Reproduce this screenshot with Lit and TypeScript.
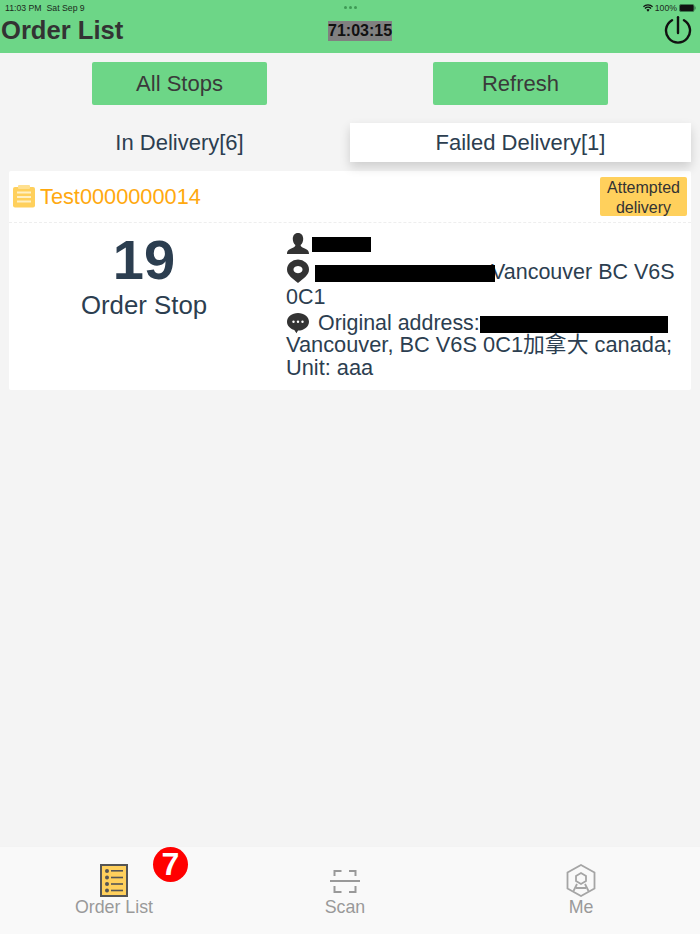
import { LitElement, html, css } from "lit";
import { customElement } from "lit/decorators.js";

@customElement("app-root")
export class AppRoot extends LitElement {
  static styles = css`
    :host { display: flex; flex-direction: column; width: 700px; height: 934px; background: #f4f4f4; color: #2c3e50; font-family: "Liberation Sans", "Noto Sans CJK SC", sans-serif; overflow: hidden; }
    .header { height: 53px; background: #6dd687; display: flex; flex-direction: column; flex: none; box-sizing: border-box; }
    .status { height: 15px; flex: none; display: grid; grid-template-columns: 1fr auto 1fr; align-items: center; padding: 0 4px 0 5px; font-size: 8.7px; color: #1c2b20; }
    .status .l { display: flex; gap: 5px; }
    .dots { display: flex; gap: 2px; }
    .dots i { width: 3px; height: 3px; border-radius: 50%; background: #3e9a55; }
    .status .r { display: flex; justify-content: flex-end; align-items: center; gap: 2px; }
    .titlebar { height: 30px; flex: none; display: grid; grid-template-columns: 327px auto 1fr; align-items: center; padding: 0 8px 0 1px; }
    h1 { margin: 0; font-size: 25.6px; line-height: 30px; font-weight: 700; color: #333; }
    .timer { background: #808080; color: #111; font-weight: 700; font-size: 16px; line-height: 20px; height: 20px; position: relative; top: 1px; }
    .power { justify-self: end; width: 28px; height: 28px; display: block; }
    .actions { display: grid; grid-template-columns: 350px 350px; padding-top: 9px; }
    .btn { justify-self: center; width: 175px; height: 43px; background: #6dd687; border-radius: 2px; font-size: 22px; line-height: 44px; text-align: center; color: #3a3a3a; }
    .a1 { margin-left: 9px; } .a2 { margin-right: 9px; }
    .tabs { display: grid; grid-template-columns: 350px 341px; margin-top: 18px; height: 39px; }
    .tab { font-size: 22px; line-height: 39px; text-align: center; }
    .tab.on { background: #fff; box-shadow: 0 5px 10px rgba(0,0,0,.16); position: relative; }
    .tab.off { padding-left: 9px; }
    .card { margin: 9px 9px 0; background: #fff; border-radius: 2px; height: 219px; display: flex; flex-direction: column; }
    .chead { height: 51px; border-bottom: 1px dashed #eee; display: flex; align-items: center; justify-content: space-between; padding: 0 4px; flex: none; }
    .cid { display: flex; align-items: center; gap: 4px; font-size: 21.75px; color: #ffa90f; }
    .badge { width: 87px; height: 39px; background: #ffd05c; border-radius: 2px; font-size: 16px; line-height: 20px; text-align: center; color: #333; margin-top: -1px; padding-top: 1px; box-sizing: border-box; }
    .cbody { display: grid; grid-template-columns: 277px 1fr; flex: 1; }
    .stop { text-align: center; padding-right: 7px; }
    .num { font-size: 56px; font-weight: 700; line-height: 60px; margin-top: 7px; }
    .lbl { font-size: 25.8px; line-height: 30px; }
    .info { font-size: 21.8px; line-height: 22.5px; padding: 9px 8px 0 0; }
    .info svg { vertical-align: -4px; }
    .addr { line-height: 25px; margin-top: 2px; font-size: 21.5px; }
    .orig { margin-top: 2px; }
    .oa { font-size: 21.4px; }
    .oi { margin-right: 2px; }
    .red { display: inline-block; background: #000; vertical-align: baseline; position: relative; }
    .r1 { width: 59px; height: 15px; margin-left: 2px; }
    .r2 { width: 180px; height: 17px; margin: 0 -4px 0 5px; vertical-align: -3px; }
    .r3 { width: 188px; height: 17px; vertical-align: -3px; }
    .spacer { flex: 1; }
    .footer { height: 88px; background: #f9f9f9; border-top: 1px solid #f3f3f3; box-sizing: border-box; display: grid; grid-template-columns: 228px 234px 238px; flex: none; position: relative; }
    .item { display: flex; flex-direction: column; align-items: center; font-size: 17.8px; color: #999; padding-top: 17px; line-height: 20px; }
    .item svg { display: block; height: 33px; }
    .badge7 { position: absolute; left: 153px; top: 0; width: 35px; height: 35px; border-radius: 50%; background: #f00; color: #fff; font-size: 32px; font-weight: 700; line-height: 35px; text-align: center; }
  `;
  render() {
    return html`
      <div class="header">
        <div class="status">
          <div class="l"><span>11:03 PM</span><span>Sat Sep 9</span></div>
          <div class="dots"><i></i><i></i><i></i></div>
          <div class="r">
            <svg width="10" height="8" viewBox="0 0 11 8"><path d="M5.5 8 3.7 6a2.6 2.6 0 0 1 3.6 0zM2.7 5 1.6 3.9a5.6 5.6 0 0 1 7.8 0L8.3 5a4 4 0 0 0-5.6 0zM.9 3.2 0 2.2a7.8 7.8 0 0 1 11 0l-.9 1a6.5 6.5 0 0 0-9.2 0z" fill="#111"/></svg>
            <span>100%</span>
            <svg width="17" height="8" viewBox="0 0 17 8"><rect x=".5" y=".5" width="14.5" height="7" rx="1.5" fill="#111" stroke="#3a7a4c"/><rect x="15.6" y="2.6" width="1" height="2.8" fill="#3a7a4c"/></svg>
          </div>
        </div>
        <div class="titlebar">
          <h1>Order List</h1>
          <div class="timer">71:03:15</div>
          <svg class="power" viewBox="0 0 28 28" fill="none" stroke="#111" stroke-width="2.4" stroke-linecap="round"><path d="M14 1.200V17"/><path d="M8 4.200A12 12 0 1 0 20 4.200"/></svg>
        </div>
      </div>
      <div class="actions">
        <div class="btn a1">All Stops</div>
        <div class="btn a2">Refresh</div>
      </div>
      <div class="tabs">
        <div class="tab off">In Delivery[6]</div>
        <div class="tab on">Failed Delivery[1]</div>
      </div>
      <div class="card">
        <div class="chead">
          <div class="cid">
            <svg width="23" height="23" viewBox="0 0 23 23"><rect x="0" y="2" width="22" height="20.500" rx="2" fill="#ffd05c"/><rect x="5" y="0" width="12" height="4" rx="1" fill="#ffe08f"/><path d="M4 7.500h14M4 12h14M4 16.500h14" stroke="#fff0c4" stroke-width="1.800"/></svg>
            <span>Test0000000014</span>
          </div>
          <div class="badge">Attempted delivery</div>
        </div>
        <div class="cbody">
          <div class="stop">
            <div class="num">19</div>
            <div class="lbl">Order Stop</div>
          </div>
          <div class="info">
            <div>
              <svg width="24" height="24" viewBox="0 0 24 24"><path d="M12 1c3.400 0 5.200 2.600 5.200 6 0 2.600-1 4.800-2.600 6 .1 1.600 1 2.200 3.600 3.300 3 1.200 4.800 2.200 4.800 5.700H1c0-3.500 1.800-4.500 4.800-5.700 2.600-1.100 3.500-1.700 3.600-3.300C7.800 11.800 6.800 9.600 6.800 7 6.800 3.600 8.600 1 12 1z" fill="#333"/></svg><span class="red r1"></span>
            </div>
            <div class="addr">
              <svg width="24" height="24" viewBox="0 0 24 24"><path fill-rule="evenodd" d="M12 24C6 19 1 16 1 10.500A11 10 0 0 1 23 10.500C23 16 18 19 12 24zM12 7a4.500 3.600 0 1 0 .01 0z" fill="#333"/></svg><span class="red r2"></span>Vancouver BC V6S 0C1
            </div>
            <div class="orig">
              <svg class="oi" width="24" height="22" viewBox="0 0 24 22"><path d="M12 1c6 0 11 3.700 11 8.800 0 5-5 8.800-11 8.800l-1.500 2.600-2.200-3.100C4 16.800 1 13.600 1 9.800 1 4.700 6 1 12 1z" fill="#333"/><circle cx="7.500" cy="9.800" r="1.200" fill="#fff"/><circle cx="12" cy="9.800" r="1.200" fill="#fff"/><circle cx="16.500" cy="9.800" r="1.200" fill="#fff"/></svg>
              <span class="oa">Original address:</span><span class="red r3"></span> Vancouver, BC V6S 0C1加拿大 canada; Unit: aaa
            </div>
          </div>
        </div>
      </div>
      <div class="spacer"></div>
      <div class="footer">
        <div class="item">
          <svg width="28" height="33" viewBox="0 0 28 33"><rect x="1" y="1" width="26" height="31" fill="#ffd05c" stroke="#555" stroke-width="2"/><g fill="#555"><circle cx="7" cy="7" r="2"/><circle cx="7" cy="13.500" r="2"/><circle cx="7" cy="20" r="2"/><circle cx="7" cy="26.500" r="2"/><rect x="11" y="6" width="12" height="1.600"/><rect x="11" y="12.700" width="12" height="1.600"/><rect x="11" y="19.200" width="12" height="1.600"/><rect x="11" y="25.700" width="12" height="1.600"/></g></svg>
          <span>Order List</span>
        </div>
        <div class="item">
          <svg width="32" height="33" viewBox="0 0 32 33" fill="none" stroke="#999" stroke-width="2"><path d="M5.500 12V7h7M20 7h6.500v5M5.500 22v6h7M20 28h6.500v-6"/><path d="M1 17h30"/></svg>
          <span>Scan</span>
        </div>
        <div class="item">
          <svg width="30" height="33" viewBox="0 0 30 33" fill="none" stroke="#a5a5a5" stroke-width="1.800"><path d="M15 1 28.500 8.500v16L15 32 1.500 24.500v-16z"/><path d="M15 9l5 3v5l-5 3-5-3v-5z"/><path d="M11 20l-3.500 7M19 20l3.500 7M10 24h10"/></svg>
          <span>Me</span>
        </div>
        <div class="badge7">7</div>
      </div>
    `;
  }
}
